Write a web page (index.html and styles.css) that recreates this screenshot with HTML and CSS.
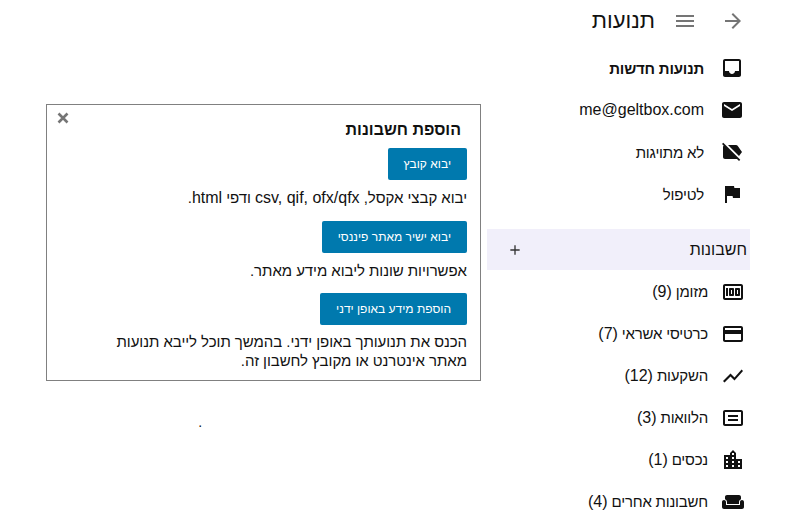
FILE: index.html
```html
<!DOCTYPE html>
<html dir="rtl" lang="he">
<head>
    <meta charset="UTF-8">
    <title>תנועות</title>
    <link rel="stylesheet" href="styles.css">
</head>
<body>
    <div class="page">
        <aside class="sidebar">
            <div class="top-bar">
                <svg class="icon icon-gray" viewBox="0 0 24 24"><path d="M12 4l-1.41 1.41L16.17 11H4v2h12.17l-5.58 5.59L12 20l8-8z"/></svg>
                <svg class="icon icon-gray" viewBox="0 0 24 24"><path d="M3 18h18v-2H3v2zm0-5h18v-2H3v2zm0-7v2h18V6H3z"/></svg>
                <span class="top-title">תנועות</span>
            </div>

            <nav class="main-nav">
                <a class="nav-item">
                    <svg class="icon" viewBox="0 0 24 24"><path d="M19 3H4.99c-1.11 0-1.98.89-1.98 2L3 19c0 1.1.88 2 1.99 2H19c1.1 0 2-.9 2-2V5c0-1.11-.9-2-2-2zm0 12h-4c0 1.66-1.35 3-3 3s-3-1.34-3-3H4.99V5H19v10z"/></svg>
                    <b>תנועות חדשות</b>
                </a>
                <a class="nav-item">
                    <svg class="icon" viewBox="0 0 24 24"><path d="M20 4H4c-1.1 0-1.99.9-1.99 2L2 18c0 1.1.9 2 2 2h16c1.1 0 2-.9 2-2V6c0-1.1-.9-2-2-2zm0 4l-8 5-8-5V6l8 5 8-5v2z"/></svg>
                    <span class="latin">me@geltbox.com</span>
                </a>
                <a class="nav-item">
                    <svg class="icon" viewBox="0 0 24 24"><path d="M3.25 2.75l17 17L19 21l-2-2H5c-1.1 0-2-.9-2-2V7c0-.55.23-1.05.59-1.41L2 4l1.25-1.25zM22 12l-4.37-6.16C17.27 5.33 16.67 5 16 5H8l11 11 3-4z"/></svg>
                    <span>לא מתויגות</span>
                </a>
                <a class="nav-item">
                    <svg class="icon" viewBox="0 0 24 24"><path d="M14.4 6L14 4H5v17h2v-7h5.6l.4 2h7V6z"/></svg>
                    <span>לטיפול</span>
                </a>
            </nav>

            <div class="accounts-head">
                <span>חשבונות</span>
                <svg class="add-icon" viewBox="0 0 24 24"><path d="M19 13h-6v6h-2v-6H5v-2h6V5h2v6h6v2z"/></svg>
            </div>

            <nav class="accounts">
                <a class="account-item">
                    <svg class="icon" viewBox="0 0 24 24"><path d="M5 8h2v8H5zm7 0H9c-.55 0-1 .45-1 1v6c0 .55.45 1 1 1h3c.55 0 1-.45 1-1V9c0-.55-.45-1-1-1zm-1 6h-1v-4h1v4zm7-6h-3c-.55 0-1 .45-1 1v6c0 .55.45 1 1 1h3c.55 0 1-.45 1-1V9c0-.55-.45-1-1-1zm-1 6h-1v-4h1v4z"/><path d="M20 4H4c-1.1 0-2 .9-2 2v12c0 1.1.9 2 2 2h16c1.1 0 2-.9 2-2V6c0-1.1-.9-2-2-2zm0 14H4V6h16v12z"/></svg>
                    <span>מזומן <span class="latin">(9)</span></span>
                </a>
                <a class="account-item">
                    <svg class="icon" viewBox="0 0 24 24"><path d="M20 4H4c-1.11 0-1.99.89-1.99 2L2 18c0 1.11.89 2 2 2h16c1.11 0 2-.89 2-2V6c0-1.11-.89-2-2-2zm0 14H4v-6h16v6zm0-10H4V6h16v2z"/></svg>
                    <span>כרטיסי אשראי <span class="latin">(7)</span></span>
                </a>
                <a class="account-item">
                    <svg class="icon" viewBox="0 0 24 24"><path d="M3.5 18.49l6-6.01 4 4L22 6.92l-1.41-1.41-7.09 7.97-4-4L2 16.99z"/></svg>
                    <span>השקעות <span class="latin">(12)</span></span>
                </a>
                <a class="account-item">
                    <svg class="icon" viewBox="0 0 24 24"><path d="M20 4H4c-1.1 0-2 .9-2 2v12c0 1.1.9 2 2 2h16c1.1 0 2-.9 2-2V6c0-1.1-.9-2-2-2zm0 14H4V6h16v12z"/><path d="M7 9h10v2H7zM7 13h10v2H7z"/></svg>
                    <span>הלוואות <span class="latin">(3)</span></span>
                </a>
                <a class="account-item">
                    <svg class="icon" viewBox="0 0 24 24"><path d="M15 11V5l-3-3-3 3v2H3v14h18V11h-6zm-8 8H5v-2h2v2zm0-4H5v-2h2v2zm0-4H5V9h2v2zm6 8h-2v-2h2v2zm0-4h-2v-2h2v2zm0-4h-2V9h2v2zm0-4h-2V5h2v2zm6 12h-2v-2h2v2zm0-4h-2v-2h2v2z"/></svg>
                    <span>נכסים <span class="latin">(1)</span></span>
                </a>
                <a class="account-item">
                    <svg class="icon" viewBox="0 0 24 24"><path d="M21 10c-1.1 0-2 .9-2 2v3H5v-3c0-1.1-.9-2-2-2s-2 .9-2 2v5c0 1.1.9 2 2 2h18c1.1 0 2-.9 2-2v-5c0-1.1-.9-2-2-2zm-3-5H6c-1.1 0-2 .9-2 2v2.15c1.16.41 2 1.52 2 2.81V14h12v-2.03c0-1.3.84-2.4 2-2.81V7c0-1.1-.9-2-2-2z"/></svg>
                    <span>חשבונות אחרים <span class="latin">(4)</span></span>
                </a>
            </nav>
        </aside>

        <main class="content">
            <section class="panel">
                <svg class="close-icon" viewBox="0 0 12 12"><path d="M1.5 1.5l9 9M10.5 1.5l-9 9"/></svg>
                <h2>הוספת חשבונות</h2>

                <button>יבוא קובץ</button>
                <p class="first">יבוא קבצי אקסל, <span class="latin">csv, qif, ofx/qfx</span> ודפי <span class="latin">html</span>.</p>

                <button>יבוא ישיר מאתר פיננסי</button>
                <p>אפשרויות שונות ליבוא מידע מאתר.</p>

                <button>הוספת מידע באופן ידני</button>
                <p class="last">הכנס את תנועותך באופן ידני. בהמשך תוכל לייבא תנועות מאתר אינטרנט או מקובץ לחשבון זה.</p>
            </section>
            <p class="dot">.</p>
        </main>
    </div>
</body>
</html>
```

FILE: styles.css
```css
html, body {
    margin: 0;
    padding: 0;
    background: #fff;
}
body {
    font-family: "Liberation Sans", Arial, sans-serif;
    font-size: 15px;
    letter-spacing: -0.2px;
    color: #111;
    height: 525px;
    overflow: hidden;
}
.latin {
    font-size: 16px;
    letter-spacing: 0;
}
.page {
    display: flex;
    padding-right: 51px;
}
.sidebar {
    width: 263px;
    flex-shrink: 0;
}
.icon {
    width: 24px;
    height: 24px;
    flex-shrink: 0;
    fill: #111;
}
.icon-gray {
    fill: #757575;
}
.top-bar {
    display: flex;
    align-items: center;
    gap: 24px;
    height: 42px;
    padding-right: 5px;
    margin-bottom: 5px;
}
.top-title {
    font-size: 22px;
    letter-spacing: 0;
    margin-right: -6px;
}
.nav-item {
    display: flex;
    align-items: center;
    gap: 16px;
    height: 42px;
    padding-right: 6px;
}
.accounts-head {
    display: flex;
    align-items: center;
    justify-content: space-between;
    height: 41px;
    margin-top: 14px;
    margin-bottom: 1px;
    padding: 0 3px 0 20px;
    background: #f1effa;
    font-size: 16px;
    letter-spacing: 0;
}
.add-icon {
    width: 16px;
    height: 16px;
    fill: #333;
}
.account-item {
    display: flex;
    align-items: center;
    gap: 13px;
    height: 42px;
    padding-right: 5px;
}
.content {
    flex: 1;
    padding: 104px 6px 0 46px;
}
.panel {
    position: relative;
    height: 277px;
    box-sizing: border-box;
    padding: 16px 13px 0;
    border: 1px solid #808080;
}
.panel h2 {
    margin: 0 6px 9px 0;
    font-size: 16px;
    line-height: 18px;
    font-weight: bold;
    letter-spacing: 0;
}
.panel button {
    display: block;
    height: 32px;
    padding: 0 16px;
    border: none;
    border-radius: 2px;
    background: #0079ae;
    color: #fff;
    font-family: inherit;
    font-size: 12px;
}
.panel p {
    max-width: 370px;
    margin: 8px 0 13px;
    line-height: 19px;
    letter-spacing: -0.05px;
}
.panel p.first {
    margin-bottom: 14px;
}
.panel p.last {
    margin-top: 7px;
}
.close-icon {
    position: absolute;
    top: 7px;
    left: 10px;
    width: 12px;
    height: 12px;
    fill: none;
    stroke: #757575;
    stroke-width: 2.6;
}
.dot {
    margin: 33px 279px 0 0;
    font-size: 14px;
}
```
